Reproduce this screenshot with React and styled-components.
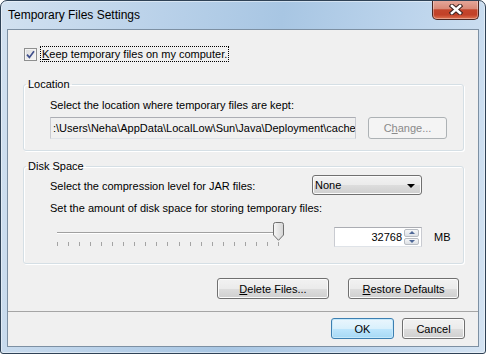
import React from "react";
import styled, { createGlobalStyle } from "styled-components";

const GlobalStyle = createGlobalStyle`
  html, body {
    margin: 0;
    padding: 0;
    background: #ffffff;
  }
  body {
    font-family: "Segoe UI", "Liberation Sans", Arial, sans-serif;
    font-size: 11px;
    color: #000;
  }
  * {
    box-sizing: border-box;
  }
`;

const Window = styled.div`
  width: 486px;
  height: 354px;
  border: 1px solid #2f4256;
  border-radius: 7px 7px 3px 3px;
  background: linear-gradient(
    100deg,
    #d2e1f0 0%,
    #b9d1e9 30%,
    #a8c6e3 52%,
    #bcd4ec 75%,
    #d4e3f2 100%
  );
  box-shadow: inset 0 0 0 1px rgba(255, 255, 255, 0.45);
  padding: 0 6px 6px 6px;
  display: flex;
  flex-direction: column;
  overflow: hidden;
`;

const TitleBar = styled.div`
  height: 28px;
  flex: none;
  display: flex;
  align-items: flex-start;
  justify-content: space-between;
`;

const Title = styled.div`
  font-size: 12px;
  line-height: 16px;
  padding: 6px 0 0 1px;
`;

const CloseButton = styled.div`
  width: 47px;
  height: 20px;
  margin-top: -1px;
  border: 1px solid #4b2621;
  border-top: none;
  border-radius: 0 0 5px 5px;
  background: linear-gradient(
    #e6aa9d 0%,
    #d98a78 45%,
    #c3452c 52%,
    #c24128 78%,
    #de7452 100%
  );
  box-shadow: inset 0 0 0 1px rgba(255, 255, 255, 0.35);
  display: flex;
  align-items: center;
  justify-content: center;
`;

const Client = styled.div`
  flex: 1;
  border: 1px solid #7d90a3;
  background: #f0f0f0;
  display: flex;
  flex-direction: column;
`;

const Body = styled.div`
  flex: 1;
  padding: 16px 14px 0 15px;
  display: flex;
  flex-direction: column;
`;

const CheckRow = styled.div`
  height: 16px;
  display: flex;
  align-items: center;
  padding-left: 1px;
`;

const CheckBox = styled.span`
  width: 13px;
  height: 13px;
  border: 1px solid #8e8f8f;
  background: linear-gradient(135deg, #dcdcdc, #f6f6f6);
  box-shadow: inset 0 0 0 1px #f4f4f4;
  display: flex;
  align-items: center;
  justify-content: center;
`;

const FocusLabel = styled.span`
  margin-left: 3px;
  padding: 0 1px;
  line-height: 14px;
  border: 1px dotted #000;
`;

const Group = styled.fieldset`
  margin: ${(p) => p.$top}px 0 0 0;
  padding: 0;
  min-width: 0;
  border: 1px solid #d5dfe5;
  border-radius: 3px;
  box-shadow: inset 1px 1px 0 #ffffff, 1px 1px 0 #ffffff;
`;

const Legend = styled.legend`
  margin-left: 2px;
  padding: 0 2px;
  line-height: 16px;
`;

const GroupInner = styled.div`
  padding: ${(p) => p.$pad};
  display: flex;
  flex-direction: column;
`;

const Line = styled.div`
  line-height: 16px;
  margin-top: ${(p) => p.$top || 0}px;
  white-space: nowrap;
`;

const Row = styled.div`
  display: flex;
  align-items: ${(p) => p.$align || "center"};
  margin-top: ${(p) => p.$top || 0}px;
`;

const PathBox = styled.div`
  width: 306px;
  height: 22px;
  border: 1px solid #abadb3;
  border-left-color: #c9cbd1;
  border-right-color: #c9cbd1;
  border-bottom-color: #dfe3e8;
  background: #f0f0f0;
  padding: 0 2px;
  line-height: 20px;
  overflow: hidden;
  white-space: nowrap;
`;

const Button = styled.div`
  width: ${(p) => p.$w}px;
  height: ${(p) => p.$h || 21}px;
  margin-left: ${(p) => p.$ml || 0}px;
  border: 1px solid #707070;
  border-radius: 3px;
  background: linear-gradient(#f2f2f2 0%, #ebebeb 50%, #dddddd 51%, #cfcfcf 100%);
  box-shadow: inset 0 0 0 1px #fbfbfb;
  display: flex;
  align-items: center;
  justify-content: center;
  white-space: nowrap;

  ${(p) =>
    p.$default &&
    `
    border-color: #3c7fb1;
    background: linear-gradient(#eaf6fd 0%, #d9f0fc 50%, #bee6fd 51%, #a7d9f5 100%);
    box-shadow: inset 0 0 0 1px #c6e9fb;
  `}

  ${(p) =>
    p.$disabled &&
    `
    border-color: #adb2b5;
    background: #f4f4f4;
    box-shadow: none;
    color: #8a8a8a;
  `}
`;

const LabelCol = styled.div`
  width: 262px;
  line-height: 16px;
  padding-top: 3px;
  white-space: nowrap;
`;

const Combo = styled.div`
  width: 110px;
  height: 20px;
  border: 1px solid #707070;
  border-radius: 3px;
  background: linear-gradient(#f2f2f2 0%, #ebebeb 50%, #dddddd 51%, #cfcfcf 100%);
  box-shadow: inset 0 0 0 1px #fbfbfb;
  display: flex;
  align-items: center;
  justify-content: space-between;
  padding: 0 6px 0 2px;
`;

const DownArrow = styled.span`
  width: 0;
  height: 0;
  border-left: 4px solid transparent;
  border-right: 4px solid transparent;
  border-top: 4px solid #000;
  margin-top: 1px;
`;

const Slider = styled.div`
  position: relative;
  width: 240px;
  height: 24px;
`;

const Track = styled.div`
  margin: 10px 0 0 7px;
  width: 222px;
  height: 2px;
  border-top: 1px solid #a0a0a0;
  border-bottom: 1px solid #ffffff;
`;

const Ticks = styled.div`
  margin: 8px 0 0 7px;
  width: 222px;
  display: flex;
  justify-content: space-between;
`;

const Tick = styled.span`
  width: 1px;
  height: 4px;
  background: #a4a4a4;
`;

const Thumb = styled.svg`
  position: absolute;
  left: 223px;
  top: 0;
`;

const SpinBox = styled.div`
  width: 88px;
  height: 20px;
  margin: 5px 0 0 44px;
  border: 1px solid #abadb3;
  border-left-color: #c9cbd1;
  border-right-color: #c9cbd1;
  border-bottom-color: #dfe3e8;
  background: #ffffff;
  display: flex;
  align-items: center;
`;

const SpinValue = styled.div`
  flex: 1;
  text-align: right;
  padding-right: 2px;
  line-height: 18px;
`;

const SpinButtons = styled.div`
  width: 15px;
  height: 16px;
  margin-right: 2px;
  display: flex;
  flex-direction: column;
  gap: 1px;
`;

const SpinButton = styled.div`
  flex: 1;
  border: 1px solid #b8bcc2;
  border-radius: 2px;
  background: linear-gradient(#f6f7f8, #dde1e6);
  display: flex;
  align-items: center;
  justify-content: center;
`;

const SpinArrow = styled.span`
  width: 0;
  height: 0;
  border-left: 3px solid transparent;
  border-right: 3px solid transparent;
  ${(p) =>
    p.$up
      ? "border-bottom: 3px solid #4f6897;"
      : "border-top: 3px solid #4f6897;"}
`;

const Unit = styled.span`
  margin: 7px 0 0 12px;
  line-height: 16px;
`;

const ActionRow = styled.div`
  margin-top: 14px;
  padding-right: 5px;
  display: flex;
  justify-content: flex-end;
  gap: 19px;
`;

const Footer = styled.div`
  flex: none;
  border-top: 1px solid #a5a5a5;
  padding: 6px 13px 7px 0;
  display: flex;
  justify-content: flex-end;
  gap: 8px;
`;

function CloseIcon() {
  return (
    <svg width="14" height="11" viewBox="0 0 14 11">
      <path
        d="M3 2 L11 9 M11 2 L3 9"
        stroke="#3d2320"
        strokeWidth="4.6"
        strokeLinecap="square"
      />
      <path
        d="M3 2 L11 9 M11 2 L3 9"
        stroke="#ffffff"
        strokeWidth="2.6"
        strokeLinecap="square"
      />
    </svg>
  );
}

function CheckMark() {
  return (
    <svg width="9" height="9" viewBox="0 0 9 9">
      <path
        d="M1 4.6 L3.4 7.4 L8 1.2"
        fill="none"
        stroke="#3f4f8c"
        strokeWidth="1.7"
      />
    </svg>
  );
}

function SliderThumb() {
  return (
    <Thumb width="11" height="19" viewBox="0 0 11 19">
      <defs>
        <linearGradient id="thumbFill" x1="0" y1="0" x2="1" y2="0">
          <stop offset="0" stopColor="#f7f7f7" />
          <stop offset="1" stopColor="#d4d4d4" />
        </linearGradient>
      </defs>
      <path
        d="M0.5 2.5 Q0.5 0.5 2.5 0.5 H8.5 Q10.5 0.5 10.5 2.5 V13 L5.5 18.3 L0.5 13 Z"
        fill="url(#thumbFill)"
        stroke="#6f6f6f"
      />
    </Thumb>
  );
}

export default function App() {
  const ticks = Array.from({ length: 21 }, (_, i) => <Tick key={i} />);

  return (
    <>
      <GlobalStyle />
      <Window>
        <TitleBar>
          <Title>Temporary Files Settings</Title>
          <CloseButton>
            <CloseIcon />
          </CloseButton>
        </TitleBar>

        <Client>
          <Body>
            <CheckRow>
              <CheckBox>
                <CheckMark />
              </CheckBox>
              <FocusLabel>
                <u>K</u>eep temporary files on my computer.
              </FocusLabel>
            </CheckRow>

            <Group $top={14}>
              <Legend>Location</Legend>
              <GroupInner $pad="5px 11px 11px 26px">
                <Line>Select the location where temporary files are kept:</Line>
                <Row $top={4}>
                  <PathBox>
                    :\Users\Neha\AppData\LocalLow\Sun\Java\Deployment\cache
                  </PathBox>
                  <Button $w={79} $h={22} $ml={12} $disabled>
                    <span>
                      C<u>h</u>ange...
                    </span>
                  </Button>
                </Row>
              </GroupInner>
            </Group>

            <Group $top={7}>
              <Legend>Disk Space</Legend>
              <GroupInner $pad="1px 11px 16px 26px">
                <Row $align="flex-start">
                  <LabelCol>Select the compression level for JAR files:</LabelCol>
                  <Combo>
                    <span>None</span>
                    <DownArrow />
                  </Combo>
                </Row>
                <Line $top={5}>
                  Set the amount of disk space for storing temporary files:
                </Line>
                <Row $top={6} $align="flex-start">
                  <Slider>
                    <Track />
                    <Ticks>{ticks}</Ticks>
                    <SliderThumb />
                  </Slider>
                  <SpinBox>
                    <SpinValue>32768</SpinValue>
                    <SpinButtons>
                      <SpinButton>
                        <SpinArrow $up />
                      </SpinButton>
                      <SpinButton>
                        <SpinArrow />
                      </SpinButton>
                    </SpinButtons>
                  </SpinBox>
                  <Unit>MB</Unit>
                </Row>
              </GroupInner>
            </Group>

            <ActionRow>
              <Button $w={112}>
                <span>
                  <u>D</u>elete Files...
                </span>
              </Button>
              <Button $w={111}>
                <span>
                  <u>R</u>estore Defaults
                </span>
              </Button>
            </ActionRow>
          </Body>

          <Footer>
            <Button $w={63} $default>
              OK
            </Button>
            <Button $w={63}>Cancel</Button>
          </Footer>
        </Client>
      </Window>
    </>
  );
}
